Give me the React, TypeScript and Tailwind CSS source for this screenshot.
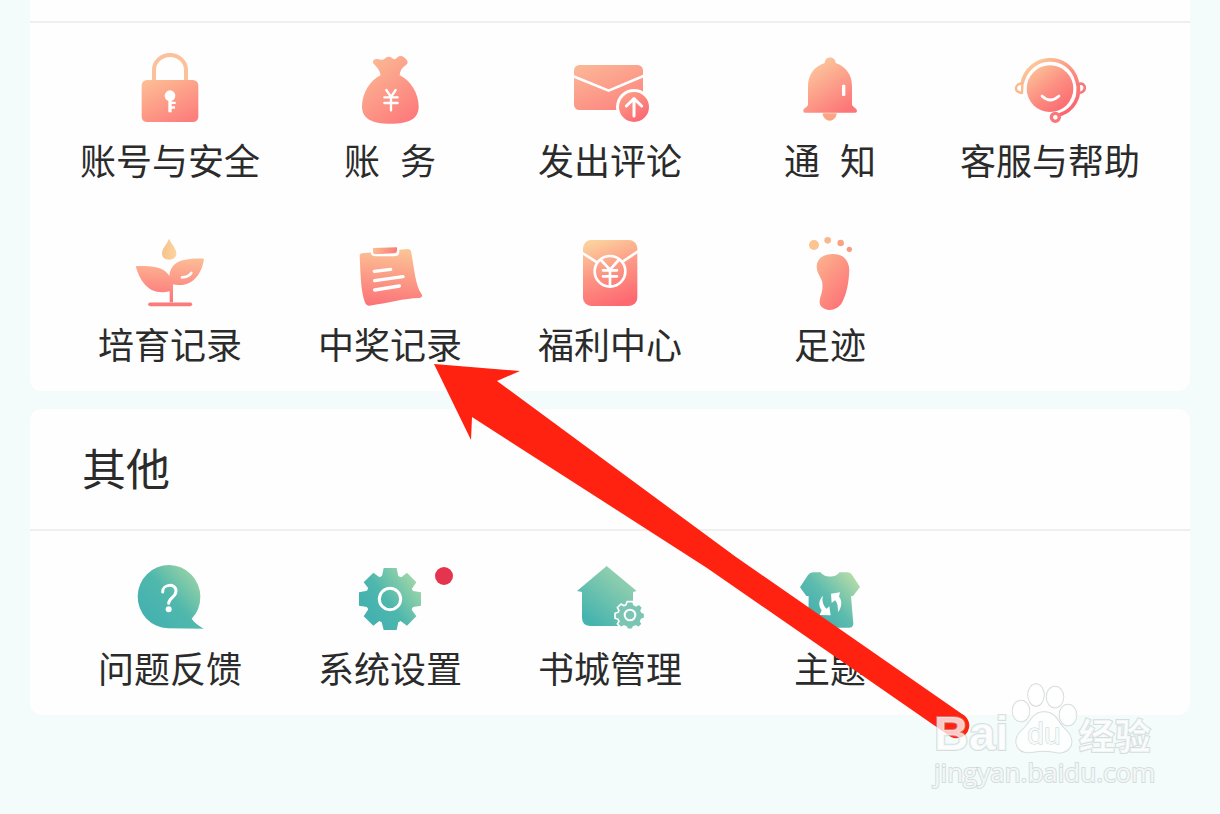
import type { ReactNode } from "react";

type Entry = { label: string; icon: ReactNode; dot?: boolean; spaced?: boolean };

function Gradient({ id, from, to, mid, flip }: { id: string; from: string; to: string; mid?: string; flip?: boolean }) {
  return (
    <linearGradient id={id} x1={flip ? "1" : "0.1"} y1={flip ? "0.1" : "0"} x2={flip ? "0.2" : "0.75"} y2={flip ? "0.8" : "1"}>
      <stop offset="0" stopColor={from} />
      {mid && <stop offset="0.6" stopColor={mid} />}
      <stop offset="1" stopColor={to} />
    </linearGradient>
  );
}

function Icon({ x, y, children }: { x: number; y: number; children: ReactNode }) {
  return (
    <svg viewBox={`${x} ${y} 270 240`} className="h-20 w-[90px]" aria-hidden="true">
      {children}
    </svg>
  );
}

function LockIcon() {
  return (
    <Icon x={195} y={24}>
      <defs><Gradient id="lock" from="#fdbd94" to="#fc7f7c" /></defs>
      <path d="M282 124V90a48 45 0 0 1 96 0v34" fill="none" stroke="#fcc09b" strokeWidth="12" />
      <rect x="245" y="120" width="170" height="126" rx="16" fill="url(#lock)" />
      <circle cx="330" cy="167" r="16" fill="#fff" />
      <path d="M325 178h10v7h12v7h-12v7h10v7h-10v11h-10z" fill="#fff" />
    </Icon>
  );
}

function BagIcon() {
  return (
    <Icon x={855} y={24}>
      <defs><Gradient id="bag" from="#fbbd96" to="#fd7b7c" /></defs>
      <path d="M962 106C960 92 952 82 941 71C935 63 942 56 953 57C962 59 968 61 974 56C982 49 990 49 997 55C1004 62 1008 55 1014 50C1024 44 1034 51 1041 61C1045 67 1043 73 1035 77C1025 83 1020 94 1019 106C1051 121 1076 159 1076 200C1076 236 1047 251 991 251C935 251 906 235 906 200C906 158 932 119 962 106Z" fill="url(#bag)" />
      <path d="M979 150l14 21 14-21M993 171v40M973 172h40M973 189h40" fill="none" stroke="#fff" strokeWidth="7" strokeLinecap="round" />
    </Icon>
  );
}

function MailIcon() {
  return (
    <Icon x={105} y={24}>
      <defs><Gradient id="mail" from="#fbb796" to="#fd8580" /><Gradient id="mailUp" from="#fca388" to="#fb6672" /></defs>
      <rect x="132" y="75" width="207" height="135" rx="16" fill="url(#mail)" />
      <path d="M130 109L236 152L342 107" fill="none" stroke="#fff" strokeWidth="8" />
      <circle cx="312" cy="201" r="54" fill="#fff" />
      <circle cx="312" cy="201" r="45" fill="url(#mailUp)" />
      <path d="M312 228V180M289 198l23-22 23 22" fill="none" stroke="#fff" strokeWidth="9" strokeLinecap="round" strokeLinejoin="round" />
    </Icon>
  );
}

function BellIcon() {
  return (
    <Icon x={765} y={24}>
      <defs><Gradient id="bell" from="#fcd2a2" to="#fc7577" /></defs>
      <path d="M884 69C884 47 916 47 917 69C948 80 966 104 966 139V193C966 201 981 204 981 213Q981 218 975 218H825Q819 218 820 212C821 203 834 202 834 193V139C834 104 853 79 884 69Z" fill="url(#bell)" />
      <path d="M878 220h42c0 11-9 22-21 22s-21-11-21-22z" fill="#fba585" />
      <rect x="936" y="134" width="10" height="34" rx="3" fill="#fff" />
    </Icon>
  );
}

function ServiceIcon() {
  return (
    <Icon x={195} y={24}>
      <defs>
        <linearGradient id="service" gradientUnits="userSpaceOnUse" x1="255" y1="70" x2="375" y2="220">
          <stop offset="0" stopColor="#fcd19c" /><stop offset="0.55" stopColor="#fc8f82" /><stop offset="1" stopColor="#fb666e" />
        </linearGradient>
      </defs>
      <circle cx="330" cy="146" r="70" fill="url(#service)" />
      <path d="M246 132C264 41 386 33 411 123C427 173 397 212 358 225" fill="none" stroke="url(#service)" strokeWidth="11" />
      <path d="M247 132C226 126 218 158 246 159Z" fill="none" stroke="#fbb990" strokeWidth="7" strokeLinejoin="round" />
      <path d="M416 132C441 125 441 161 413 159Z" fill="none" stroke="#f87879" strokeWidth="8" strokeLinejoin="round" />
      <circle cx="346" cy="232" r="12" fill="#fff" stroke="#f9777b" strokeWidth="10" />
      <path d="M306 168Q330 192 357 168" fill="none" stroke="#fff" strokeWidth="8" strokeLinecap="round" />
    </Icon>
  );
}

function PlantIcon() {
  return (
    <Icon x={135} y={21}>
      <defs>
        <linearGradient id="plant" gradientUnits="userSpaceOnUse" x1="270" y1="85" x2="265" y2="220">
          <stop offset="0" stopColor="#fcc498" /><stop offset="1" stopColor="#fd7a7c" />
        </linearGradient>
        <linearGradient id="drop"><stop stopColor="#f8c18b" /><stop offset="1" stopColor="#fad59f" /></linearGradient>
      </defs>
      <path d="M267 41C277 61 289 70 289 86C289 97 280 104 268 104C254 104 246 97 246 85C246 70 259 61 267 41Z" fill="url(#drop)" />
      <path d="M167 124C220 119 257 129 268 153C272 117 294 98 372 101C366 146 339 180 300 180Q289 181 279 178V232H269V199C211 213 182 175 167 124Z" fill="url(#plant)" />
      <path d="M306 157Q326 156 334 144" fill="none" stroke="#fff" strokeWidth="8" strokeLinecap="round" />
      <path d="M210 238h121" stroke="#fb7b78" strokeWidth="11" strokeLinecap="round" />
    </Icon>
  );
}

function NoteIcon() {
  return (
    <Icon x={795} y={21}>
      <defs>
        <linearGradient id="note" x1="0.55" y1="0" x2="0.45" y2="1"><stop stopColor="#fbc495" /><stop offset="1" stopColor="#fc7478" /></linearGradient>
        <linearGradient id="clip"><stop stopColor="#fbbd90" /><stop offset="1" stopColor="#fa7b78" /></linearGradient>
      </defs>
      <path d="M846 85L984 72Q991 72 993 79C1002 121 1005 181 1025 208Q1030 217 1018 219C971 220 925 234 868 242Q860 243 856 235C842 200 842 150 839 92Q839 86 846 85Z" fill="url(#note)" />
      <path d="M872 68H958V80Q958 94 944 94H886Q872 94 872 80Z" fill="#fff" />
      <path d="M879 69L951 67V78Q951 84 943 85L886 88Q879 88 879 82Z" fill="url(#clip)" />
      <path d="M883 139l49-6M884 167l85-12M884 195l74-12" stroke="#fff" strokeWidth="10" strokeLinecap="round" />
    </Icon>
  );
}

function PacketIcon() {
  return (
    <Icon x={105} y={21}>
      <defs>
        <linearGradient id="packet" x1="0.3" y1="0" x2="0.6" y2="1">
          <stop stopColor="#fcd09d" /><stop offset="0.5" stopColor="#fd9483" /><stop offset="1" stopColor="#fd6871" />
        </linearGradient>
      </defs>
      <rect x="159" y="45" width="163" height="198" rx="25" fill="url(#packet)" />
      <path d="M157 84L201 112M324 79L279 109" fill="none" stroke="#fff" strokeWidth="8" />
      <circle cx="240" cy="139" r="46" fill="none" stroke="#fff" strokeWidth="8" />
      <path d="M213 105L240 134L266 105M240 134V184M219 136h42M219 154h42" fill="none" stroke="#fff" strokeWidth="8" strokeLinecap="round" />
    </Icon>
  );
}

function FootIcon() {
  return (
    <Icon x={765} y={21}>
      <defs><Gradient id="foot" from="#fcb28e" to="#fd7176" /></defs>
      <circle cx="852" cy="60" r="15" fill="#fbc491" />
      <circle cx="893" cy="46" r="10" fill="#fab68d" />
      <circle cx="932" cy="54" r="10" fill="#faa486" />
      <circle cx="958" cy="73" r="8" fill="#f99b83" />
      <path d="M908 87C937 86 957 104 958 135C956 174 951 203 937 231C925 253 902 259 885 252C867 244 867 231 871 217C877 199 879 185 876 169C869 150 860 142 860 123C861 100 883 87 908 87Z" fill="url(#foot)" />
    </Icon>
  );
}

function QuestionIcon() {
  return (
    <Icon x={135} y={18}>
      <defs><Gradient flip id="question" from="#a9d8a6" mid="#50b8ac" to="#46b2b0" /></defs>
      <path d="M361 140A94 95 0 1 0 264 235L371 236C356 227 344 219 335 206Q361 179 361 140Z" fill="url(#question)" />
      <path d="M248 126C247 102 288 98 288 123C288 142 266 143 266 160" fill="none" stroke="#fff" strokeWidth="9" strokeLinecap="round" />
      <circle cx="266" cy="178" r="9" fill="#fff" />
    </Icon>
  );
}

function SettingsIcon() {
  return (
    <Icon x={795} y={18}>
      <defs>
        <linearGradient id="gear" gradientUnits="userSpaceOnUse" x1="1010" y1="80" x2="870" y2="185">
          <stop stopColor="#a5d9a8" /><stop offset="0.65" stopColor="#4eb7ad" /><stop offset="1" stopColor="#46b2af" />
        </linearGradient>
      </defs>
      <g fill="url(#gear)">
        <circle cx="930" cy="147" r="72" />
        <path d="M911 54H950L955 79L964 82L981 68L1009 97L995 117L999 123L1023 127V167L999 171L994 178L1009 199L981 227L962 213L955 217L950 240H911L905 217L898 213L880 227L851 199L865 178L861 171L837 167V127L861 122L865 115L851 97L880 68L899 82L906 78Z" />
      </g>
      <circle cx="930" cy="147" r="32" fill="none" stroke="#fff" strokeWidth="9" />
    </Icon>
  );
}

function HouseIcon() {
  const gear = "M291 155H309L312 164L318 167L327 162L338 173L333 182L336 187L344 190V205L335 208L332 214L337 222L326 233L317 228L310 231L307 238H292L289 231L282 228L273 233L262 222L267 214L264 208L255 205V190L264 187L267 182L262 173L273 162L282 167L288 164Z";
  return (
    <Icon x={105} y={18}>
      <defs>
        <linearGradient id="house" x1="0.8" y1="0.15" x2="0.2" y2="0.9"><stop stopColor="#96d0af" /><stop offset="1" stopColor="#46b4ae" /></linearGradient>
      </defs>
      <path d="M230 48L320 123L309 126V228H180Q156 226 156 203V126L141 123Z" fill="url(#house)" />
      <path d={gear} fill="#7bc5b4" stroke="#fff" strokeWidth="5" strokeLinejoin="round" />
      <circle cx="300" cy="195" r="16" fill="none" stroke="#fff" strokeWidth="6" />
    </Icon>
  );
}

function ShirtIcon() {
  return (
    <Icon x={765} y={18}>
      <defs><Gradient flip id="shirt" from="#bddfa7" mid="#5dbcae" to="#43afae" /></defs>
      <path d="M849 67H872C881 84 920 84 928 67H953Q960 67 965 73L990 111L969 138L963 139L970 222Q969 233 957 233H848Q835 233 835 220L836 139L829 138L810 112L834 75Q840 67 849 67Z" fill="url(#shirt)" />
      <path d="M879 137C865 152 865 166 875 181L869 195L902 196L898 169L890 176C879 166 875 151 879 137Z" fill="#fff" />
      <path d="M903 131L930 127L927 140C938 151 935 174 924 186C924 171 923 158 915 151L905 159Z" fill="#fff" />
    </Icon>
  );
}

const services: Entry[] = [
  { label: "账号与安全", icon: <LockIcon /> },
  { label: "账务", icon: <BagIcon />, spaced: true },
  { label: "发出评论", icon: <MailIcon /> },
  { label: "通知", icon: <BellIcon />, spaced: true },
  { label: "客服与帮助", icon: <ServiceIcon /> },
  { label: "培育记录", icon: <PlantIcon /> },
  { label: "中奖记录", icon: <NoteIcon /> },
  { label: "福利中心", icon: <PacketIcon /> },
  { label: "足迹", icon: <FootIcon /> },
];

const others: Entry[] = [
  { label: "问题反馈", icon: <QuestionIcon /> },
  { label: "系统设置", icon: <SettingsIcon />, dot: true },
  { label: "书城管理", icon: <HouseIcon /> },
  { label: "主题", icon: <ShirtIcon /> },
];

function EntryGrid({ entries }: { entries: Entry[] }) {
  return (
    <div className="grid grid-cols-5 gap-y-[51px] border-t-2 border-[#efefef] px-[30px] pt-[25px] pb-[26px]">
      {entries.map(({ label, icon, dot, spaced }) => (
        <button key={label} type="button" className="relative flex flex-col items-center gap-[9px]">
          {icon}
          {dot && <span className="absolute top-[11px] left-1/2 ml-[45px] size-[18px] rounded-full bg-[#e5344f]" />}
          <span className="flex gap-5 text-4xl leading-11 whitespace-nowrap">
            {spaced ? Array.from(label).map((char) => <span key={char}>{char}</span>) : label}
          </span>
        </button>
      ))}
    </div>
  );
}

function Arrow() {
  return (
    <svg viewBox="434 364 536 376" className="pointer-events-none absolute top-[364px] left-[434px] h-[376px] w-[536px]" aria-hidden="true">
      <path d="M434 364L520 371L497 381L736 557L962 714A12 12 0 0 1 951 737L707 568L472 417L471 440Z" fill="#ff2211" />
    </svg>
  );
}

function Watermark() {
  return (
    <div className="pointer-events-none absolute right-[66px] bottom-[26px] flex w-[220px] flex-col text-white/75 [paint-order:stroke_fill] [-webkit-text-stroke:2px_rgba(180,192,192,0.5)]">
      <div className="flex items-end gap-px">
        <span className="font-['Liberation_Sans'] text-5xl leading-11 font-bold">Bai</span>
        <svg viewBox="1008 682 68 74" className="h-[74px] w-[68px]" aria-hidden="true">
          <g fill="rgba(255,255,255,0.8)" stroke="#d3d8d8" strokeWidth="1.5">
            <ellipse cx="1019" cy="711" rx="8.5" ry="10.5" />
            <ellipse cx="1034" cy="695" rx="8" ry="11" />
            <ellipse cx="1053" cy="697" rx="8.5" ry="10.5" />
            <ellipse cx="1066" cy="715" rx="8.5" ry="10.5" />
            <path d="M1042 712C1055 712 1056 724 1064 730C1076 742 1067 756 1052 752Q1042 750 1031 752C1014 755 1009 740 1020 730C1028 724 1030 712 1042 712Z" />
          </g>
          <text x="1042" y="744" textAnchor="middle" fontFamily="Liberation Sans" fontSize="30" fill="#f5fbfb" stroke="#ccd2d2" strokeWidth="1" style={{ WebkitTextStroke: "1px #c8cece" }}>du</text>
        </svg>
        <span className="text-4xl leading-11 font-bold">经验</span>
      </div>
      <span className="font-['Open_Sans'] text-[26px] leading-8">jingyan.baidu.com</span>
    </div>
  );
}

export default function App() {
  return (
    <div className="min-h-screen bg-[#f3fcfb] font-['Noto_Sans_CJK_SC',sans-serif] text-[#2b2b2b]">
      <main className="relative flex min-h-screen flex-col gap-[18px] px-[30px]">
        <section className="rounded-b-xl bg-[#fefefe] pt-[21px]">
          <EntryGrid entries={services} />
        </section>
        <section className="rounded-xl bg-[#fefefe]">
          <h2 className="px-13 pt-[34px] pb-[38px] text-[44px] leading-12">其他</h2>
          <EntryGrid entries={others} />
        </section>
        <Arrow />
        <Watermark />
      </main>
    </div>
  );
}
